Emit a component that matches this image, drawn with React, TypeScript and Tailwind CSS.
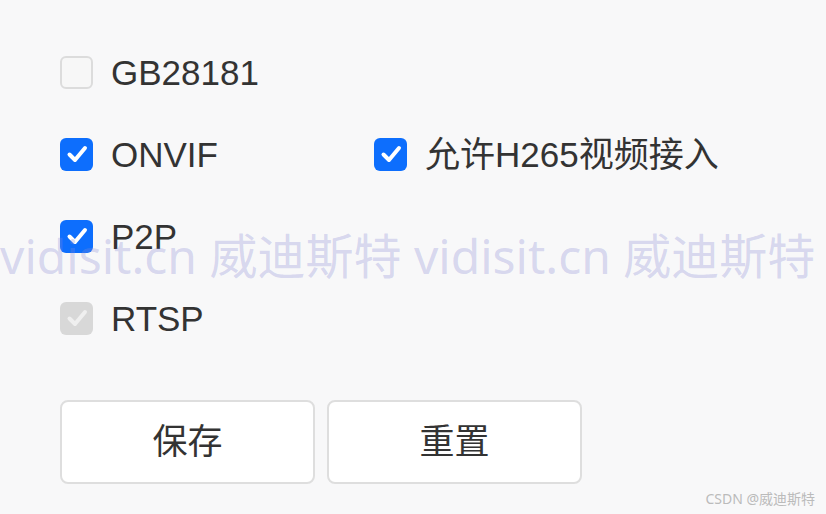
import React from "react";

type CBState = "off" | "on" | "disabled";

function Box({ state }: { state: CBState }) {
  if (state === "off") {
    return <div className="w-[33px] h-[33px] rounded-[6px] border-2 border-[#dcdcdc] bg-[#f7f7f7] shrink-0" />;
  }
  const bg = state === "on" ? "bg-[#0d6efd]" : "bg-[#d8d8d8]";
  const stroke = state === "on" ? "#ffffff" : "#efefef";
  return (
    <div className={`w-[33px] h-[33px] rounded-[6px] ${bg} shrink-0 flex items-center justify-center`}>
      <svg width="24" height="24" viewBox="0 0 24 24">
        <path d="M4.5 12.5 L10 18 L20 6" fill="none" stroke={stroke} strokeWidth="4" strokeLinecap="round" strokeLinejoin="round" />
      </svg>
    </div>
  );
}

function Item({ state, label }: { state: CBState; label: string }) {
  return (
    <div className="flex items-center gap-[18px]">
      <Box state={state} />
      <span className="text-[35px] leading-none text-[#333333]">{label}</span>
    </div>
  );
}

export default function App() {
  return (
    <div
      className="relative w-[826px] h-[514px] bg-[#f8f8f9] overflow-hidden"
      style={{ fontFamily: '"Liberation Sans", Arial, "Noto Sans CJK SC", sans-serif' }}
    >
      <div className="pl-[60px] pt-[31px]">
        <div className="h-[82px] flex items-center">
          <Item state="off" label="GB28181" />
        </div>
        <div className="h-[82px] flex items-center">
          <div className="w-[314px]">
            <Item state="on" label="ONVIF" />
          </div>
          <Item state="on" label="允许H265视频接入" />
        </div>
        <div className="h-[82px] flex items-center">
          <Item state="on" label="P2P" />
        </div>
        <div className="h-[82px] flex items-center">
          <Item state="disabled" label="RTSP" />
        </div>
        <div className="mt-[41px] flex gap-[12px]">
          <button className="w-[255px] h-[84px] rounded-[8px] border-2 border-[#dedede] bg-white text-[35px] text-[#333333] flex items-center justify-center">
            保存
          </button>
          <button className="w-[255px] h-[84px] rounded-[8px] border-2 border-[#dedede] bg-white text-[35px] text-[#333333] flex items-center justify-center">
            重置
          </button>
        </div>
      </div>

      <div
        className="absolute left-[0px] top-[232px] whitespace-nowrap text-[48px] leading-none text-[rgba(135,137,212,0.3)] pointer-events-none"
        style={{ fontFamily: '"Noto Sans", "Noto Sans CJK SC", sans-serif' }}
      >
        vidisit.cn 威迪斯特 vidisit.cn 威迪斯特
      </div>

      <div
        className="absolute right-[11px] bottom-[8px] text-[14px] leading-none text-[#bbbbbb]"
        style={{ fontFamily: '"Noto Sans", "Noto Sans CJK SC", sans-serif' }}
      >
        CSDN @威迪斯特
      </div>
    </div>
  );
}
